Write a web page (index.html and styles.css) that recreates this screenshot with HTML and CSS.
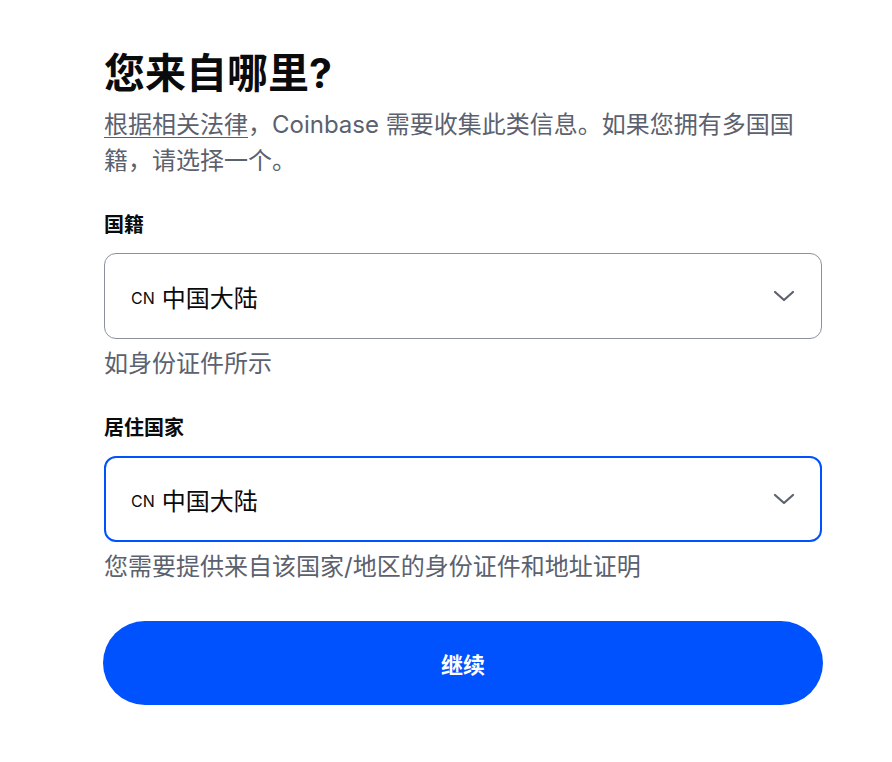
FILE: index.html
```html
<!DOCTYPE html>
<html lang="zh-CN">
<head>
<meta charset="utf-8">
<title>您来自哪里?</title>
<link rel="stylesheet" href="styles.css">
</head>
<body>
<main class="page">
  <h1 class="title">您来自哪里?</h1>
  <p class="subtitle"><a class="law-link" href="#">根据相关法律</a>，Coinbase 需要收集此类信息。如果您拥有多国国籍，请选择一个。</p>

  <div class="field field-first">
    <label class="label">国籍</label>
    <div class="select">
      <span class="code">CN</span>
      <span class="value">中国大陆</span>
      <svg class="chevron" width="22" height="14" viewBox="0 0 22 14"><path d="M2 3 L11 11 L20 3" fill="none" stroke="#5b616e" stroke-width="2.2" stroke-linecap="round" stroke-linejoin="round"/></svg>
    </div>
    <p class="helper">如身份证件所示</p>
  </div>

  <div class="field field-second">
    <label class="label">居住国家</label>
    <div class="select select-focus">
      <span class="code">CN</span>
      <span class="value">中国大陆</span>
      <svg class="chevron" width="22" height="14" viewBox="0 0 22 14"><path d="M2 3 L11 11 L20 3" fill="none" stroke="#5b616e" stroke-width="2.2" stroke-linecap="round" stroke-linejoin="round"/></svg>
    </div>
    <p class="helper">您需要提供来自该国家/地区的身份证件和地址证明</p>
  </div>

  <button class="continue">继续</button>
</main>
</body>
</html>
```

FILE: styles.css
```css
* { box-sizing: border-box; }
html, body { margin: 0; padding: 0; background: #ffffff; }
body {
  font-family: Inter, "Noto Sans CJK SC", "Noto Sans", sans-serif;
  color: #0a0b0d;
}
.page {
  width: 718px;
  margin-left: 104px;
  padding-top: 49px;
}
.title {
  margin: 0;
  font-size: 41px;
  line-height: 48px;
  font-weight: 700;
}
.subtitle {
  margin: 10px 0 0;
  font-size: 24px;
  line-height: 36px;
  color: #5b616e;
  width: 700px;
}
.law-link {
  color: #5b616e;
  text-decoration: underline;
  text-underline-offset: 4px;
  text-decoration-thickness: 1px;
}
.field { display: flex; flex-direction: column; }
.field-first { margin-top: 32px; }
.field-second { margin-top: 34px; }
.label {
  font-size: 20px;
  line-height: 28px;
  font-weight: 700;
}
.select {
  margin-top: 14px;
  height: 86px;
  border: 1px solid #8a919e;
  border-radius: 12px;
  display: flex;
  align-items: center;
  padding: 0 26px 0 26px;
}
.select-focus {
  border: 2px solid #0052ff;
  padding: 0 25px 0 25px;
}
.code {
  font-size: 16px;
  margin-right: 7px;
  padding-top: 4px;
}
.value {
  font-size: 24px;
  flex: 1;
}
.chevron { display: block; }
.helper {
  margin: 9px 0 0;
  font-size: 24px;
  line-height: 32px;
  color: #5b616e;
}
.continue {
  display: block;
  margin-top: 38px;
  width: 720px;
  margin-left: -1px;
  height: 84px;
  border: none;
  border-radius: 42px;
  background: #0052ff;
  color: #ffffff;
  font-family: Inter, "Noto Sans CJK SC", sans-serif;
  font-size: 22px;
  font-weight: 700;
}
```
